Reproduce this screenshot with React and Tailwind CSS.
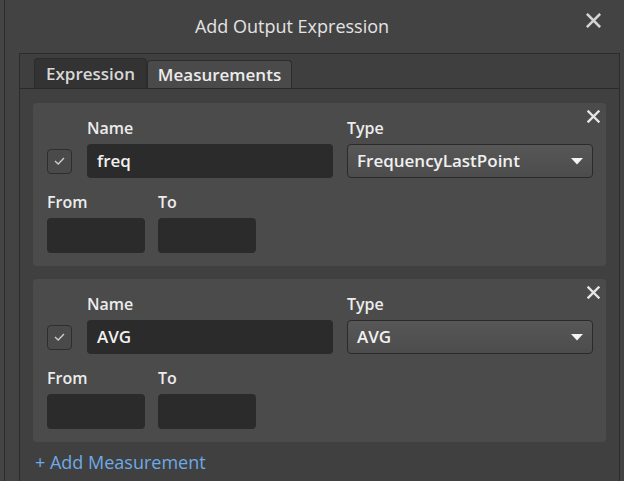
import React from "react";

// One measurement row card
const measurements = [
  { name: "freq", type: "FrequencyLastPoint" },
  { name: "AVG", type: "AVG" },
];

function CloseIcon({ size = 13, color = "#e6e6e6", stroke = 2.4 }) {
  return (
    <svg width={size} height={size} viewBox="0 0 13 13">
      <path d="M1.5 1.5 L11.5 11.5 M11.5 1.5 L1.5 11.5" stroke={color} strokeWidth={stroke} strokeLinecap="square" />
    </svg>
  );
}

function MeasurementCard({ name, type }) {
  return (
    <div className="relative bg-[#4b4b4b] rounded-[4px] pl-[14px] pr-[13px] pt-[14px] pb-[13px]">
      <button className="absolute top-[7px] right-[6px] w-[13px] h-[13px] flex items-center justify-center">
        <CloseIcon />
      </button>

      <div className="grid grid-cols-[26px_246px_246px] gap-x-[14px]">
        <div />
        <div className="h-[22px] leading-[22px] text-[16px] font-semibold text-[#ececec] mb-[5px]">Name</div>
        <div className="h-[22px] leading-[22px] text-[16px] font-semibold text-[#ececec] mb-[5px]">Type</div>

        <div className="flex items-center">
          <div className="w-[25px] h-[25px] rounded-[4px] border border-[#2e2e2e] bg-[#4a4a4a] flex items-center justify-center">
            <svg width="11" height="8" viewBox="0 0 11 8">
              <path d="M1 4 L4.2 7 L10 1" fill="none" stroke="#cfcfcf" strokeWidth="1.3" />
            </svg>
          </div>
        </div>
        <div className="h-[34px] rounded-[4px] bg-[#2b2b2b] pl-[10px] flex items-center text-[17px] font-semibold text-[#f0f0f0]">
          {name}
        </div>
        <div className="h-[34px] rounded-[4px] border border-[#2a2a2a] bg-gradient-to-b from-[#575757] to-[#4c4c4c] pl-[9px] pr-[9px] flex items-center justify-between text-[17px] font-semibold text-[#f0f0f0]">
          <span>{type}</span>
          <svg width="12" height="7" viewBox="0 0 12 7">
            <polygon points="0,0 12,0 6,6.5" fill="#f4f4f4" />
          </svg>
        </div>
      </div>

      <div className="flex gap-[13px] mt-[13px]">
        {["From", "To"].map((label) => (
          <div key={label} className="w-[98px]">
            <div className="h-[22px] leading-[22px] text-[16px] font-semibold text-[#ececec] mb-[5px]">{label}</div>
            <div className="h-[35px] rounded-[4px] bg-[#2b2b2b]" />
          </div>
        ))}
      </div>
    </div>
  );
}

export default function App() {
  return (
    <div className="w-[624px] h-[481px] overflow-hidden bg-[#444444] font-['Open_Sans',sans-serif]">
      <div className="ml-[4px] h-full border-l border-[#2c2c2c] bg-[#434343] flex flex-col">
        {/* Title bar */}
        <div className="relative h-[53px] flex items-center justify-center pr-[45px] shrink-0">
          <span className="text-[18px] text-[#e4e4e4]">Add Output Expression</span>
          <button className="absolute top-[13px] right-[23px] w-[15px] h-[15px] flex items-center justify-center">
            <CloseIcon size={15} color="#d4d4d4" stroke={2.2} />
          </button>
        </div>

        {/* Tab box */}
        <div className="ml-[14px] mr-[4px] flex-1 border-l border-t border-r border-[#2c2c2c] flex flex-col">
          <div className="h-[35px] flex items-end pl-[14px] border-b border-[#2a2a2a] bg-[#3f3f3f] shrink-0">
            <div className="h-[30px] w-[113px] rounded-t-[4px] border border-b-0 border-[#2c2c2c] bg-[#333333] flex items-center justify-center text-[17px] font-semibold text-[#d8d8d8]">
              Expression
            </div>
            <div className="h-[28px] w-[145px] rounded-t-[4px] border border-b-0 border-[#2c2c2c] bg-[#4a4a4a] flex items-center justify-center text-[17px] font-semibold text-[#ececec]">
              Measurements
            </div>
          </div>

          <div className="flex-1 bg-[#404040] px-[13px] pt-[14px]">
            <div className="flex flex-col gap-[13px]">
              {measurements.map((m) => (
                <MeasurementCard key={m.name} name={m.name} type={m.type} />
              ))}
            </div>
            <div className="mt-[8px] pl-[2px] text-[18px] text-[#6eaae6] leading-[24px]">+ Add Measurement</div>
          </div>
        </div>
      </div>
    </div>
  );
}
